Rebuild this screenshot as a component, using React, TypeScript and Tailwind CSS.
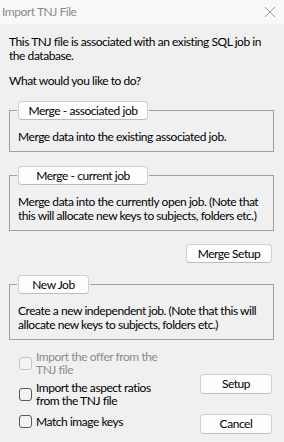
import React from "react";

const font = "font-['Segoe_UI','Lato','Liberation_Sans',sans-serif]";

function WinButton({ children, className = "" }: { children: React.ReactNode; className?: string }) {
  return (
    <button
      type="button"
      className={`h-[19px] rounded-[4px] border border-[#d0d0d0] border-b-[#bcbcbc] bg-[#fdfdfd] text-[12px] leading-[14px] text-black flex items-center justify-center whitespace-nowrap ${className}`}
    >
      {children}
    </button>
  );
}

function Group({ label, labelWidth, children }: { label: string; labelWidth: string; children: React.ReactNode }) {
  return (
    <fieldset className="border border-[#a0a0a0] pl-[7px] pr-[4px] pb-[7px]">
      <legend className="px-[1px]">
        <WinButton className={labelWidth}>{label}</WinButton>
      </legend>
      <div className="ml-[1px] mt-[10px] leading-[14px] whitespace-nowrap">{children}</div>
    </fieldset>
  );
}

function Check({ disabled = false, children }: { disabled?: boolean; children: React.ReactNode }) {
  return (
    <div className="flex items-center gap-[4px]">
      <span
        className={`shrink-0 w-[13px] h-[13px] rounded-[3px] border ${
          disabled ? "border-[#c6c6c6] bg-[#f4f4f4]" : "border-[#595959] bg-[#f3f3f3]"
        }`}
      />
      <span className={`leading-[13px] whitespace-nowrap ${disabled ? "text-[#8c8c8c]" : "text-black"}`}>{children}</span>
    </div>
  );
}

export default function App() {
  return (
    <div className={`w-[284px] h-[442px] bg-[#f0f0f0] text-[12px] tracking-[-0.45px] text-black ${font} overflow-hidden`}>
      <div className="h-[24px] bg-[#f9f9f9] flex items-center justify-between pl-[2px] pr-[8px]">
        <span className="text-[12px] text-[#8a8a8a] leading-[14px]">Import TNJ File</span>
        <svg width="12" height="12" viewBox="0 0 12 12">
          <path d="M1 1 L11 11 M11 1 L1 11" stroke="#9a9a9a" strokeWidth="1" fill="none" />
        </svg>
      </div>
      <div className="pl-[9px] pr-[10px]">
        <p className="pt-[11px] leading-[14px] whitespace-nowrap">
          This TNJ file is associated with an existing SQL job in
          <br />
          the database.
        </p>
        <p className="mt-[11px] leading-[14px] whitespace-nowrap">What would you like to do?</p>

        <div className="mt-[13px]">
          <Group label="Merge - associated job" labelWidth="w-[130px]">
            Merge data into the existing associated job.
          </Group>
        </div>

        <div className="mt-[14px]">
          <Group label="Merge - current job" labelWidth="w-[130px]">
            Merge data into the currently open job. (Note that
            <br />
            this will allocate new keys to subjects, folders etc.)
          </Group>
        </div>

        <div className="flex justify-end mt-[13px] pr-[2px]">
          <WinButton className="w-[86px]">Merge Setup</WinButton>
        </div>

        <div className="mt-[12px]">
          <Group label="New Job" labelWidth="w-[71px]">
            Create a new independent job. (Note that this will
            <br />
            allocate new keys to subjects, folders etc.)
          </Group>
        </div>

        <div className="flex justify-between pr-[2px]">
          <div className="pl-[10px] pt-[10px] flex flex-col">
            <Check disabled>
              Import the offer from the
              <br />
              TNJ file
            </Check>
            <div className="mt-[5px]">
              <Check>
                Import the aspect ratios
                <br />
                from the TNJ file
              </Check>
            </div>
            <div className="mt-[8px]">
              <Check>Match image keys</Check>
            </div>
          </div>
          <div className="flex flex-col pt-[34px] gap-[20px]">
            <WinButton className="w-[72px] h-[20px]">Setup</WinButton>
            <WinButton className="w-[72px] h-[20px]">Cancel</WinButton>
          </div>
        </div>
      </div>
    </div>
  );
}
